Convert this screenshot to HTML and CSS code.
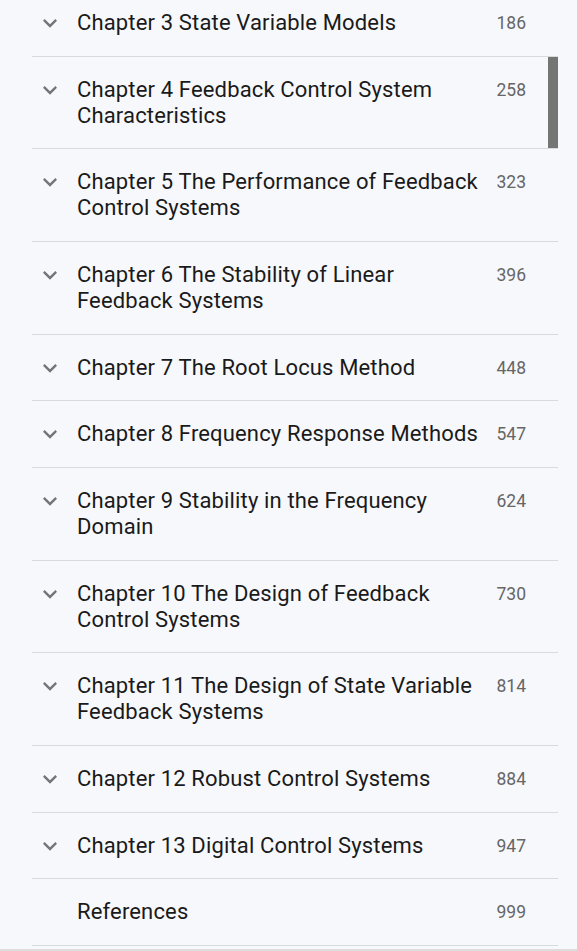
FILE: index.html
```html
<!DOCTYPE html>
<html>
<head>
<meta charset="utf-8">
<link rel="stylesheet" href="styles.css">
</head>
<body>
<div class="page">
  <ul class="toc">
    <li class="row"><span class="chev"><svg viewBox="0 0 24 24" width="28" height="28"><path d="M7.41 8.59 12 13.17l4.59-4.58L18 10l-6 6-6-6z"/></svg></span><span class="title">Chapter 3 State Variable Models</span><span class="pg">186</span></li>
    <li class="row"><span class="chev"><svg viewBox="0 0 24 24" width="28" height="28"><path d="M7.41 8.59 12 13.17l4.59-4.58L18 10l-6 6-6-6z"/></svg></span><span class="title">Chapter 4 Feedback Control System Characteristics</span><span class="pg">258</span></li>
    <li class="row"><span class="chev"><svg viewBox="0 0 24 24" width="28" height="28"><path d="M7.41 8.59 12 13.17l4.59-4.58L18 10l-6 6-6-6z"/></svg></span><span class="title">Chapter 5 The Performance of Feedback Control Systems</span><span class="pg">323</span></li>
    <li class="row"><span class="chev"><svg viewBox="0 0 24 24" width="28" height="28"><path d="M7.41 8.59 12 13.17l4.59-4.58L18 10l-6 6-6-6z"/></svg></span><span class="title">Chapter 6 The Stability of Linear Feedback Systems</span><span class="pg">396</span></li>
    <li class="row"><span class="chev"><svg viewBox="0 0 24 24" width="28" height="28"><path d="M7.41 8.59 12 13.17l4.59-4.58L18 10l-6 6-6-6z"/></svg></span><span class="title">Chapter 7 The Root Locus Method</span><span class="pg">448</span></li>
    <li class="row"><span class="chev"><svg viewBox="0 0 24 24" width="28" height="28"><path d="M7.41 8.59 12 13.17l4.59-4.58L18 10l-6 6-6-6z"/></svg></span><span class="title">Chapter 8 Frequency Response Methods</span><span class="pg">547</span></li>
    <li class="row"><span class="chev"><svg viewBox="0 0 24 24" width="28" height="28"><path d="M7.41 8.59 12 13.17l4.59-4.58L18 10l-6 6-6-6z"/></svg></span><span class="title">Chapter 9 Stability in the Frequency Domain</span><span class="pg">624</span></li>
    <li class="row"><span class="chev"><svg viewBox="0 0 24 24" width="28" height="28"><path d="M7.41 8.59 12 13.17l4.59-4.58L18 10l-6 6-6-6z"/></svg></span><span class="title">Chapter 10 The Design of Feedback Control Systems</span><span class="pg">730</span></li>
    <li class="row"><span class="chev"><svg viewBox="0 0 24 24" width="28" height="28"><path d="M7.41 8.59 12 13.17l4.59-4.58L18 10l-6 6-6-6z"/></svg></span><span class="title">Chapter 11 The Design of State Variable Feedback Systems</span><span class="pg">814</span></li>
    <li class="row"><span class="chev"><svg viewBox="0 0 24 24" width="28" height="28"><path d="M7.41 8.59 12 13.17l4.59-4.58L18 10l-6 6-6-6z"/></svg></span><span class="title">Chapter 12 Robust Control Systems</span><span class="pg">884</span></li>
    <li class="row"><span class="chev"><svg viewBox="0 0 24 24" width="28" height="28"><path d="M7.41 8.59 12 13.17l4.59-4.58L18 10l-6 6-6-6z"/></svg></span><span class="title">Chapter 13 Digital Control Systems</span><span class="pg">947</span></li>
    <li class="row"><span class="chev"></span><span class="title">References</span><span class="pg">999</span></li>
  </ul>
  <div class="scrollbar"></div>
  <div class="footer"></div>
</div>
</body>
</html>
```

FILE: styles.css
```css
html, body {
  margin: 0;
  padding: 0;
  background: #f7f8fc;
  height: 951px;
  overflow: hidden;
}
.page {
  position: relative;
  height: 951px;
  overflow: hidden;
  font-family: Roboto, "Noto Sans", sans-serif;
}
.toc {
  list-style: none;
  margin: -10px 19px 0 32px;
  padding: 0;
}
.row {
  display: flex;
  align-items: flex-start;
  padding: 20px 32px 19.67px 4px;
  border-bottom: 1px solid #d9dadd;
}
.chev {
  width: 28px;
  height: 26px;
  flex: none;
  margin-right: 13px;
}
.chev svg {
  display: block;
  margin-top: -1px;
  overflow: visible;
  fill: #757575;
}
.title {
  flex: 1;
  font-size: 22px;
  line-height: 26px;
  letter-spacing: 0.15px;
  color: #1a1a1a;
}
.pg {
  flex: none;
  width: 30px;
  margin-left: 11px;
  text-align: right;
  font-size: 17.5px;
  line-height: 26px;
  color: #666;
}
.scrollbar {
  position: absolute;
  left: 548px;
  top: 57px;
  width: 10px;
  height: 91px;
  background: #757575;
}
.footer {
  position: absolute;
  left: 0;
  right: 0;
  bottom: 0;
  height: 2px;
  background: #dcdcdc;
}
```
